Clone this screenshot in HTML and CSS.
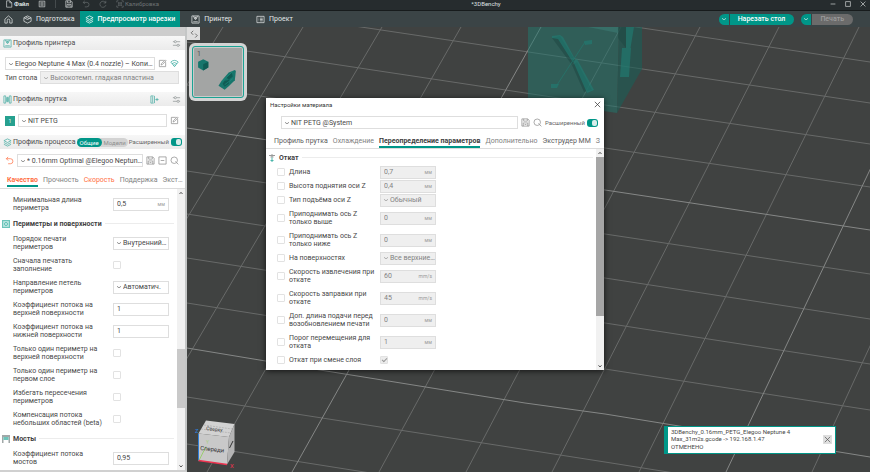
FILE: index.html
```html
<!DOCTYPE html>
<html lang="ru">
<head>
<meta charset="utf-8">
<title>*3DBenchy</title>
<link rel="stylesheet" href="styles.css">
</head>
<body>
<svg class="sprite" aria-hidden="true">
  <symbol id="i-chev" viewBox="0 0 6 6"><path d="M1 2.300 3 3.800 5 2.300"/></symbol>
  <symbol id="i-file" viewBox="0 0 10 10"><path d="M2 1h4l2.500 2.500V9H2zM6 1v2.500h2.500"/></symbol>
  <symbol id="i-menu" viewBox="0 0 10 10"><path d="M1.500 1.500h7v7h-7zM3 3.500h4M3 5h4M3 6.500h4"/></symbol>
  <symbol id="i-save" viewBox="0 0 10 10"><path d="M1 1h6.500L9 2.500V9H1zM3 1v2.500h4V1M2.500 9V5.500h5V9M4 7.200h2"/></symbol>
  <symbol id="i-undo" viewBox="0 0 10 10"><path d="M3.500 1 1.500 3l2 2M1.500 3H6a2.800 2.800 0 0 1 0 5.600H3.500"/></symbol>
  <symbol id="i-redo" viewBox="0 0 10 10"><path d="M8.500 1v2.700H5.800M8.300 3.500A3.800 3.800 0 1 0 8.600 6.500"/></symbol>
  <symbol id="i-calib" viewBox="0 0 10 10"><path d="M1 3V1h2M7 1h2v2M9 7v2H7M3 9H1V7M3 3.200h1.200v1.200H3zM5.800 3.200H7v1.200H5.800zM3 5.800h1.200V7H3zM5.800 5.800H7V7H5.800z"/></symbol>
  <symbol id="i-home" viewBox="0 0 10 10"><path d="M1 4.600 5 1l4 3.600V9H6.400V6a1.400 1.400 0 0 0-2.800 0v3H1z"/></symbol>
  <symbol id="i-cube" viewBox="0 0 10 10"><path d="M5 1l4 2v4L5 9 1 7V3zM1 3l4 2 4-2M3 2l4 2"/></symbol>
  <symbol id="i-layers" viewBox="0 0 10 10"><path d="M5 1l4 2-4 2-4-2zM1 5l4 2 4-2M1 7l4 2 4-2"/></symbol>
  <symbol id="i-printer" viewBox="0 0 10 10"><path d="M1 1h8v8H1zM3 1v1.500h4V1M5 2.500v1.500M3.500 3.500h3L5 5.300zM2.500 7.500h5"/></symbol>
  <symbol id="i-project" viewBox="0 0 10 10"><path d="M1 1.500h8v7H1zM3 3.500h.5M4.500 3.500H7.500M3 5h.5M4.500 5H7.500M3 6.500h.5M4.500 6.500H7.500"/></symbol>
  <symbol id="i-sliders" viewBox="0 0 10 10"><path d="M1 3h1.500M5 3h4M1 7h4.500M8 7h1"/><circle cx="3.700" cy="3" r="1.200"/><circle cx="6.800" cy="7" r="1.200"/></symbol>
  <symbol id="i-edit" viewBox="0 0 10 10"><path d="M6.500 1.500h-5v7h7v-5M3.500 6.700l.3-1.500L8 1l1 1-4.200 4.200z"/></symbol>
  <symbol id="i-wifi" viewBox="0 0 10 10"><path d="M.8 3.400a6.300 6.300 0 0 1 8.400 0M2.200 5.200a4.200 4.200 0 0 1 5.600 0M3.600 7a2 2 0 0 1 2.800 0M5 8.500v.2M1 3.500l4 5 4-5"/></symbol>
  <symbol id="i-spool" viewBox="0 0 10 10"><path d="M1 1h2v8H1zM7 1h2v8H7zM4 2.500v5M5 2v6M6 2.500v5"/></symbol>
  <symbol id="i-add" viewBox="0 0 10 10"><path d="M4 1H1v8h3M3 1.500v7M5 1v8M6 5h3.500M7.800 3.300v3.400"/></symbol>
  <symbol id="i-minus" viewBox="0 0 10 10"><path d="M1 1h8v8H1zM3 5h4"/></symbol>
  <symbol id="i-search" viewBox="0 0 10 10"><circle cx="4.700" cy="4.700" r="3.600"/><path d="M7.200 7.200 9.300 9.300M6 6l1 1"/></symbol>
  <symbol id="i-x" viewBox="0 0 10 10"><path d="M2 2l6 6M8 2 2 8"/></symbol>
  <symbol id="i-up" viewBox="0 0 6 6"><path d="M1.500 4 3 2.300 4.500 4"/></symbol>
  <symbol id="i-down" viewBox="0 0 6 6"><path d="M1.500 2.300 3 4 4.500 2.300"/></symbol>
</svg>

<header class="titlebar">
  <button class="tb-btn file"><svg class="ic"><use href="#i-file"/></svg>Файл</button>
  <button class="tb-btn" aria-label="Меню"><svg class="ic"><use href="#i-menu"/></svg></button>
  <span class="sep"></span>
  <button class="tb-btn save" aria-label="Сохранить"><svg class="ic"><use href="#i-save"/></svg></button>
  <button class="tb-btn dim" aria-label="Отменить"><svg class="ic"><use href="#i-undo"/></svg></button>
  <button class="tb-btn dim redo" aria-label="Повторить"><svg class="ic"><use href="#i-redo"/></svg></button>
  <button class="tb-btn dim"><svg class="ic"><use href="#i-calib"/></svg>Калибровка</button>
  <span class="doc">*3DBenchy</span>
  <button class="tb-btn win" aria-label="Свернуть"><svg class="ic" viewBox="0 0 10 10"><path d="M2 5h6"/></svg></button>
  <button class="tb-btn win" aria-label="Развернуть"><svg class="ic" viewBox="0 0 10 10"><path d="M2 2h6v6H2z"/></svg></button>
  <button class="tb-btn win" aria-label="Закрыть"><svg class="ic"><use href="#i-x"/></svg></button>
</header>

<nav class="toolbar">
  <button class="nav-btn home" aria-label="Домой"><svg class="ic"><use href="#i-home"/></svg></button>
  <button class="nav-btn"><svg class="ic"><use href="#i-cube"/></svg>Подготовка</button>
  <button class="nav-btn active"><svg class="ic"><use href="#i-layers"/></svg>Предпросмотр нарезки</button>
  <button class="nav-btn wide"><svg class="ic"><use href="#i-printer"/></svg>Принтер</button>
  <button class="nav-btn wide"><svg class="ic"><use href="#i-project"/></svg>Проект</button>
  <div class="split">
    <button class="split-drop" aria-label="Варианты нарезки"><svg class="chev"><use href="#i-chev"/></svg></button>
    <button class="split-main">Нарезать стол</button>
  </div>
  <div class="split print">
    <button class="split-drop" aria-label="Варианты печати"><svg class="chev"><use href="#i-chev"/></svg></button>
    <button class="split-main" disabled>Печать</button>
  </div>
</nav>

<main class="work">
  <aside class="side">
    <div class="band"></div>
    <section class="group printer">
      <h2 class="head"><svg class="ic teal"><use href="#i-printer"/></svg><span>Профиль принтера</span><svg class="ic tail"><use href="#i-sliders"/></svg></h2>
      <div class="line">
        <div class="pick grow"><svg class="chev"><use href="#i-chev"/></svg><select aria-label="Профиль принтера"><option>Elegoo Neptune 4 Max (0.4 nozzle) – Копи…</option></select></div>
        <button class="icon-btn" aria-label="Изменить"><svg class="ic"><use href="#i-edit"/></svg></button>
        <button class="icon-btn" aria-label="Сеть"><svg class="ic teal"><use href="#i-wifi"/></svg></button>
      </div>
      <div class="line bed">
        <label for="bed">Тип стола</label>
        <div class="pick grow off"><svg class="chev"><use href="#i-chev"/></svg><select id="bed"><option>Высокотемп. гладкая пластина</option></select></div>
      </div>
    </section>
    <section class="group filament">
      <h2 class="head"><svg class="ic teal"><use href="#i-spool"/></svg><span>Профиль прутка</span><svg class="ic tail teal"><use href="#i-add"/></svg><svg class="ic gap"><use href="#i-sliders"/></svg></h2>
      <div class="line">
        <button class="slot">1</button>
        <div class="pick grow"><svg class="chev"><use href="#i-chev"/></svg><select aria-label="Профиль прутка"><option>NIT PETG</option></select></div>
        <button class="icon-btn" aria-label="Изменить"><svg class="ic"><use href="#i-edit"/></svg></button>
      </div>
    </section>
    <section class="group process">
      <h2 class="head"><svg class="ic teal"><use href="#i-layers"/></svg><span>Профиль процесса</span>
        <span class="pill"><button class="on">Общие</button><button>Модели</button></span>
        <label class="adv tail">Расширенный<input type="checkbox" class="toggle" checked></label></h2>
      <div class="line">
        <button class="icon-btn orange" aria-label="Сбросить"><svg class="ic"><use href="#i-undo"/></svg></button>
        <div class="pick grow"><svg class="chev"><use href="#i-chev"/></svg><select aria-label="Профиль процесса"><option>* 0.16mm Optimal @Elegoo Neptun…</option></select></div>
        <button class="icon-btn" aria-label="Сохранить"><svg class="ic"><use href="#i-save"/></svg></button>
        <button class="icon-btn" aria-label="Удалить"><svg class="ic"><use href="#i-minus"/></svg></button>
        <button class="icon-btn" aria-label="Поиск"><svg class="ic"><use href="#i-search"/></svg></button>
      </div>
    </section>
    <div class="tabs side-tabs" role="tablist">
      <button role="tab" class="tab cur changed">Качество</button>
      <button role="tab" class="tab">Прочность</button>
      <button role="tab" class="tab changed">Скорость</button>
      <button role="tab" class="tab">Поддержка</button>
      <button role="tab" class="tab">Экст…</button>
    </div>
    <div class="scroll">
      <div class="rows">
        <div class="row"><label for="p1">Минимальная длина периметра</label><span class="num"><input id="p1" value="0,5"><i>мм</i></span></div>
        <h3 class="sub"><svg class="subic" viewBox="0 0 8 8"><path class="f1" d="M0 0h8v8H0z"/><path class="w" d="M1.500 1.500h5v5h-5zM2 2l4 4M6 2 2 6"/></svg>Периметры и поверхности</h3>
        <div class="row"><label for="p2">Порядок печати периметров</label><span class="pick"><svg class="chev"><use href="#i-chev"/></svg><select id="p2"><option>Внутренний…</option></select></span></div>
        <div class="row"><label for="p3">Сначала печатать заполнение</label><input type="checkbox" id="p3" class="check"></div>
        <div class="row"><label for="p4">Направление петель периметров</label><span class="pick"><svg class="chev"><use href="#i-chev"/></svg><select id="p4"><option>Автоматич.</option></select></span></div>
        <div class="row"><label for="p5">Коэффициент потока на верхней поверхности</label><span class="num"><input id="p5" value="1"></span></div>
        <div class="row"><label for="p6">Коэффициент потока на нижней поверхности</label><span class="num"><input id="p6" value="1"></span></div>
        <div class="row"><label for="p7">Только один периметр на верхней поверхности</label><input type="checkbox" id="p7" class="check"></div>
        <div class="row"><label for="p8">Только один периметр на первом слое</label><input type="checkbox" id="p8" class="check"></div>
        <div class="row"><label for="p9">Избегать пересечения периметров</label><input type="checkbox" id="p9" class="check"></div>
        <div class="row"><label for="p10">Компенсация потока небольших областей (beta)</label><input type="checkbox" id="p10" class="check"></div>
        <h3 class="sub"><svg class="subic" viewBox="0 0 8 8"><path class="g" d="M0 0h8v2H0zM0 2h1.500v6H0zM6.500 2H8v6H6.500z"/><path class="f2" d="M1.500 2h5v3h-5z"/></svg>Мосты</h3>
        <div class="row"><label for="p11">Коэффициент потока мостов</label><span class="num"><input id="p11" value="0,95"></span></div>
      </div>
      <div class="bar"><svg class="arrow"><use href="#i-up"/></svg><span class="track"><span class="space"></span><span class="thumb"></span></span><svg class="arrow"><use href="#i-down"/></svg></div>
    </div>
  </aside>

  <section class="scene">
    <svg class="plate" viewBox="187 27 683 445" preserveAspectRatio="xMinYMin slice">
      <g class="grid">
        <path d="M223 27-54 472M303 27 33 472M382 27 120 472M461 27 207 472M621 27 379 472M700 27 466 472M779 27 552 472M859 27 639 472M1017 27 812 472"/>
        <path d="M187-40 870 62M187 1 870 103M187 42 605 105 870 144M187 85 605 148 870 187M187 171 605 234 870 274M187 214 605 278 870 319M187 258 605 323 870 364M187 303 605 369 870 410M187 397 605 462 870 504M187 444 605 510"/>
      </g>
      <g class="grid major">
        <path d="M541 27 292 472M938 27 726 472M187 128 605 190 870 230M187 348 320 370 525 403 605 414 870 457"/>
      </g>
      <g class="calcube">
        <path class="c-front" d="M528 27h91l-2 86-89-13z"/>
        <path class="c-side" d="M619 27h23v42l-25 44z"/>
        <path class="c-hi" d="M588 27h31l-1 6z"/>
        <path class="c-dark" d="M552 38l8-2 15 24-3 5zM572 65l5-3 15 28-8 2z"/>
        <path class="c-let" d="M552 36l8-1 3 2 12 22-3 2-14-22-6-1zM573 61l4-2 17 31-7 3zM584 41l8-1v4l-7 1zM551 84h8l-2 4h-6z"/>
        <path class="c-line" d="M585 42l-28 43"/>
        <path class="c-dark" d="M618 27h8v21l-8-10z"/>
        <path class="c-let" d="M622 48h9l-2 29h-9zM626 27h8l-4 24h-4z"/>
      </g>
      <g class="navcube">
        <path class="n-top" d="M206 420.500 234.500 424 229 437 198.500 433.500z"/>
        <path class="n-front" d="M198.500 433.500 229 437 227 464.500 198.500 460.500z"/>
        <path class="n-side" d="M229 437 234.500 424V452L227 464.500z"/>
        <path class="n-edge" d="M204 425l28 4M201 429l30 4"/>
        <path class="n-mark" d="M229.500 448l3.500-7"/>
        <path class="ax-z" d="M198.500 434v26.500"/>
        <path class="ax-y" d="M199 460.500l7-14"/>
        <path class="ax-x" d="M198.500 460.500l28.500 4"/>
        <text class="n-text" transform="translate(200 450) rotate(6)">Спереди</text>
        <text class="n-text small" transform="translate(206 430) rotate(6)">Сверху</text>
        <text class="t-z" x="195" y="433">Z</text>
        <text class="t-y" x="206" y="444">Y</text>
        <text class="t-x" x="230" y="468">X</text>
      </g>
    </svg>
    <button class="fold" aria-label="Свернуть панель"><svg class="ic" viewBox="0 0 10 10"><path d="M4 1 1.500 3.500 4 6M6.500 4.500 9 7 6.500 9.500"/></svg></button>
    <button class="thumbnail" aria-label="Стол 1">
      <span>1</span>
      <svg viewBox="0 0 49 49">
        <path class="m1" d="M10 12l5 2.500v5.500l-5 3-5-3v-5.500z"/><path class="m2" d="M10 17l5-2.500v5.500l-5 3z"/>
        <path class="m1" d="M25 38l3-5 7-8 6-2.500 1 1-1 9-6 6-4 3.500z"/>
        <path class="m2" d="M29 36l2-3 5-1-1 4-4 3zM33 30l5-5 1 4-4 3z"/><path class="m3" d="M28 34l11-10M31 37l8-6"/>
      </svg>
    </button>
    <div class="toast" role="status">
      <p>3DBenchy_0.16mm_PETG_Elegoo Neptune 4<br>Max_31m2s.gcode -&gt; 192.168.1.47</p>
      <p class="state">ОТМЕНЕНО</p>
      <button class="toast-x" aria-label="Закрыть"><svg class="ic"><use href="#i-x"/></svg></button>
    </div>
  </section>
</main>

<div class="dialog" role="dialog" aria-labelledby="dt">
  <div class="dlg-title"><span id="dt">Настройки материала</span><button class="icon-btn" aria-label="Закрыть"><svg class="ic"><use href="#i-x"/></svg></button></div>
  <div class="line dlg-line">
    <div class="pick grow"><svg class="chev"><use href="#i-chev"/></svg><select aria-label="Материал"><option>NIT PETG @System</option></select></div>
    <button class="icon-btn" aria-label="Сохранить"><svg class="ic"><use href="#i-save"/></svg></button>
    <button class="icon-btn" aria-label="Поиск"><svg class="ic"><use href="#i-search"/></svg></button>
    <label class="adv">Расширенный<input type="checkbox" class="toggle" checked></label>
  </div>
  <div class="tabs dlg-tabs" role="tablist">
    <button role="tab" class="tab dark">Профиль прутка</button>
    <button role="tab" class="tab">Охлаждение</button>
    <button role="tab" class="tab cur">Переопределение параметров</button>
    <button role="tab" class="tab">Дополнительно</button>
    <button role="tab" class="tab dark">Экструдер ММ</button>
    <button role="tab" class="tab">З</button>
  </div>
  <div class="scroll">
    <div class="rows">
      <h3 class="sub"><svg class="subic" viewBox="0 0 8 8"><path class="s" d="M1 1.500h6M4 0v3M2.500 3h3"/><path class="t" d="M4 3.500v4.500M2.500 6.500h3"/></svg>Откат</h3>
      <div class="row one"><input type="checkbox" class="check" aria-label="Длина"><label for="m1">Длина</label><span class="num off"><input id="m1" value="0,7" disabled><i>мм</i></span></div>
      <div class="row one"><input type="checkbox" class="check" aria-label="Высота поднятия"><label for="m2">Высота поднятия оси Z</label><span class="num off"><input id="m2" value="0,4" disabled><i>мм</i></span></div>
      <div class="row one"><input type="checkbox" class="check" aria-label="Тип подъёма"><label for="m3">Тип подъёма оси Z</label><span class="pick off"><svg class="chev"><use href="#i-chev"/></svg><select id="m3" disabled><option>Обычный</option></select></span></div>
      <div class="row"><input type="checkbox" class="check" aria-label="Только выше"><label for="m4">Приподнимать ось Z<br>только выше</label><span class="num off"><input id="m4" value="0" disabled><i>мм</i></span></div>
      <div class="row"><input type="checkbox" class="check" aria-label="Только ниже"><label for="m5">Приподнимать ось Z<br>только ниже</label><span class="num off"><input id="m5" value="0" disabled><i>мм</i></span></div>
      <div class="row one"><input type="checkbox" class="check" aria-label="На поверхностях"><label for="m6">На поверхностях</label><span class="pick off"><svg class="chev"><use href="#i-chev"/></svg><select id="m6" disabled><option>Все верхние…</option></select></span></div>
      <div class="row"><input type="checkbox" class="check" aria-label="Скорость извлечения"><label for="m7">Скорость извлечения при откате</label><span class="num off"><input id="m7" value="60" disabled><i>mm/s</i></span></div>
      <div class="row"><input type="checkbox" class="check" aria-label="Скорость заправки"><label for="m8">Скорость заправки при<br>откате</label><span class="num off"><input id="m8" value="45" disabled><i>mm/s</i></span></div>
      <div class="row"><input type="checkbox" class="check" aria-label="Доп. длина подачи"><label for="m9">Доп. длина подачи перед возобновлением печати</label><span class="num off"><input id="m9" value="0" disabled><i>мм</i></span></div>
      <div class="row"><input type="checkbox" class="check" aria-label="Порог перемещения"><label for="m10">Порог перемещения для отката</label><span class="num off"><input id="m10" value="1" disabled><i>мм</i></span></div>
      <div class="row one"><input type="checkbox" class="check" aria-label="Смена слоя"><label for="m11">Откат при смене слоя</label><input type="checkbox" id="m11" class="check" checked disabled></div>
    </div>
    <div class="bar"><svg class="arrow"><use href="#i-up"/></svg><span class="track"><span class="thumb"></span></span><svg class="arrow"><use href="#i-down"/></svg></div>
  </div>
</div>
</body>
</html>
```
FILE: styles.css
```css
:root {
  --teal: #009688;
  --text: #484848;
  --muted: #828282;
  --border: #dedede;
  --fs: 7px;
  --fs-small: 6px;
}
* { box-sizing: border-box; margin: 0; padding: 0; }
body {
  height: 100vh;
  display: flex;
  flex-direction: column;
  overflow: hidden;
  font: var(--fs)/8px Roboto, "Noto Sans", sans-serif;
  color: var(--text);
  background: #404241;
}
button, input, select { font: inherit; color: inherit; border: 0; background: none; appearance: none; outline: 0; }
select { min-width: 0; flex: 1; white-space: nowrap; overflow: hidden; }
select:disabled, input:disabled { opacity: 1; }
h2, h3 { font-size: inherit; }
svg { flex: none; fill: none; stroke: currentColor; stroke-width: 1; }
.sprite { position: absolute; width: 0; height: 0; }
.ic { width: 9px; height: 9px; stroke-width: .8; }
.ic.teal { color: #35a99d; }
.chev { width: 6px; height: 6px; stroke-width: .6; }

/* Title bar */
.titlebar {
  flex: none;
  height: 11px;
  display: flex;
  align-items: center;
  padding: 0 3px 3px 5px;
  background: #262c2e;
  border-bottom: 1px solid #171b1c;
  color: #dfe2e2;
  font-size: var(--fs-small);
}
.tb-btn { display: flex; align-items: center; gap: 1px; height: 8px; }
.tb-btn .ic { width: 8px; height: 8px; }
.file { margin-right: 9px; font-weight: 700; }
.sep { width: 1px; height: 8px; background: #454b4d; margin: 0 9px 0 9px; }
.save { margin-right: 9px; }
.dim { color: #6d7375; }
.redo { margin: 0 9px; }
.doc { flex: 1; text-align: center; padding: 0 9px 0 0; }
.win { margin-left: 7px; }

/* Toolbar */
.toolbar {
  flex: none;
  height: 16px;
  display: flex;
  align-items: center;
  padding-right: 17px;
  background: #3b4446;
  color: #e4e8e8;
}
.nav-btn { height: 16px; display: flex; align-items: center; gap: 4px; padding: 0 5px; }
.nav-btn.home { padding: 0 5px 0 4px; }
.nav-btn.active { background: var(--teal); color: #fff; font-weight: 500; }
.nav-btn.wide { padding: 0 13px 0 11px; }
.split { display: flex; gap: 1px; height: 11px; margin-left: 7px; color: #fff; font-weight: 500; }
.nav-btn + .split { margin-left: auto; }
.split-drop { display: flex; align-items: center; padding: 0 2px; background: var(--teal); border-radius: 6px 0 0 6px; }
.split-main { padding: 0 9px 0 8px; background: var(--teal); border-radius: 0 6px 6px 0; }
.print .split-main { background: #6b6b6b; color: #9b9b9b; }

.work { flex: 1; min-height: 0; display: flex; }

/* Side panel */
.side {
  flex: 0 0 187px;
  min-width: 0;
  display: flex;
  flex-direction: column;
  background: #fff;
  border-right: 2px solid #c4c6c6;
  border-bottom: 2px solid #d0d0d0;
}
.band { height: 9px; background: #cdcdcd; }
.head {
  height: 14px;
  display: flex;
  align-items: center;
  gap: 1px;
  padding: 0 4px 0 3px;
  background: linear-gradient(#f7f7f7, #ebebeb);
  font-weight: 400;
  color: #4c4c4c;
  white-space: nowrap;
}
.head > .ic { color: #8d9292; }
.head > .ic.teal { color: #45aca2; }
.head > .tail { margin-left: auto; }
.head > .gap { margin-left: 12px; }
.line { display: flex; align-items: center; gap: 3px; padding: 0 6px 0 5px; }
.group .line { margin-top: 7px; }
.group .bed { margin: 1px 0 8px; gap: 3px; }
.filament .line { margin: 8px 0; }
.process .line { margin: 5px 0 7px; }
.pick {
  display: flex;
  align-items: center;
  gap: 1px;
  height: 13px;
  min-width: 0;
  padding: 0 0 0 2px;
  border: 1px solid var(--border);
  background: #fff;
}
.grow { flex: 1; }
.off { background: #efefef; color: var(--muted); }
.icon-btn { display: flex; color: #8c8c8c; }
.icon-btn.orange { color: #ff6f43; }
.slot { width: 10px; height: 10px; background: #26a08f; color: #d7efec; font-size: var(--fs-small); }
.pill { display: flex; height: 9px; border-radius: 5px; background: #d3d3d3; font-size: var(--fs-small); line-height: 9px; color: #8e8e8e; }
.pill button { padding: 0 2px; border-radius: 5px; }
.pill .on { padding: 0 3px; background: var(--teal); color: #fff; }
.adv { display: flex; align-items: center; gap: 2px; font-size: var(--fs-small); color: #666; white-space: nowrap; }
.toggle { position: relative; width: 11px; height: 8px; border-radius: 3px; background: var(--teal); }
.toggle::before { content: ""; position: absolute; right: 1px; top: 1px; width: 5px; height: 6px; border-radius: 2px; background: #d8ecea; }

.tabs { flex: none; display: flex; gap: 6px; height: 15px; padding: 0 0 0 7px; border-bottom: 1px solid #dcdcdc; }
.side-tabs { gap: 5px; }
.tab { flex: none; height: 13px; white-space: nowrap; color: #808080; border-bottom: 2px solid transparent; }
.tab.dark { color: #5c5c5c; }
.tab.cur { font-weight: 700; color: #3d3d3d; border-color: var(--teal); }
.tab.changed { color: #ff6f43; }

.scroll { flex: 1; min-height: 0; display: flex; overflow: hidden; }
.rows { flex: 1; min-width: 0; padding-top: 4px; }
.row { display: flex; align-items: center; height: 22px; padding-left: 13px; }
.row label { flex: none; width: 91px; }
.side .row label { margin-right: 9px; }
.num { display: flex; align-items: center; width: 56px; height: 13px; border: 1px solid var(--border); padding: 0 3px; background: #fff; }
.num input { flex: 1; width: 20px; }
.num i { font-style: normal; font-size: 5px; color: #999; }
.row .pick { width: 56px; }
.num.off, .pick.off { background: #efefef; }
.check { flex: none; width: 8px; height: 8px; border: 1px solid #e2e2e2; border-radius: 1px; background: #fff; }
.check:checked { background: #ececec; position: relative; }
.check:checked::before { content: ""; position: absolute; left: 1px; top: 1px; width: 4px; height: 2px; border: solid #999; border-width: 0 0 1px 1px; transform: rotate(-45deg); }
.sub { display: flex; align-items: center; gap: 3px; height: 17px; padding: 0 3px 0 2px; color: #3f3f3f; }
.sub::after { content: ""; flex: 1; height: 1px; background: #ececec; }
.subic { width: 8px; height: 8px; stroke: none; }
.f1, .f2 { fill: #6cc4ba; }
.g { fill: #a0a8a8; }
.w { stroke: #e4f5f3; stroke-width: .6; }
.s { stroke: #9a9a9a; }
.t { stroke: #4ab5aa; }

.bar { flex: none; width: 8px; display: flex; flex-direction: column; align-items: center; background: #f1f1f1; color: #555; }
.arrow { width: 6px; height: 8px; }
.track { flex: 1; align-self: stretch; display: flex; flex-direction: column; }
.space { flex: 152; }
.thumb { flex: 59; background: #c9c9c9; }
.side .track::after { content: ""; flex: 54; }

/* 3D scene */
.scene { flex: 1; min-width: 0; position: relative; overflow: hidden; background: #404241; }
.plate { position: absolute; width: 100%; height: 100%; }
.grid { stroke: #686a69; stroke-width: 1; }
.major { stroke: #858786; }
.calcube { stroke: none; }
.c-front { fill: #1f7a70; fill-opacity: .5; }
.c-side { fill: #1b5f57; fill-opacity: .6; }
.c-hi { fill: #3d7f78; fill-opacity: .5; }
.c-dark { fill: #1f4945; fill-opacity: .6; }
.c-let { fill: #1f7f74; fill-opacity: .6; }
.c-line { stroke: #24786e; stroke-width: 1; stroke-opacity: .7; }
.navcube { stroke: none; }
.n-top { fill: #d2d2d2; }
.n-front { fill: #c9c9c9; }
.n-side { fill: #b4b4b4; }
.n-edge { stroke: #8d8d8d; stroke-width: .4; stroke-dasharray: 2 1; }
.n-mark { stroke: #333; stroke-width: 1; }
.ax-z { stroke: #2f7fd8; }
.ax-y { stroke: #8fce5a; stroke-width: .8; }
.ax-x { stroke: #ee3350; stroke-width: 1.5; }
.n-text { fill: #333; font-size: 6px; }
.n-text.small { font-size: 5px; }
.t-z { fill: #2f7fd8; font-size: 6px; }
.t-y { fill: #a5cf84; font-size: 5px; }
.t-x { fill: #ee3350; font-size: 6px; }

.fold { position: absolute; left: 0; top: 0; width: 13px; height: 13px; display: grid; place-items: center; background: #dedede; color: #555; }
.fold .ic { stroke-width: 1; width: 8px; height: 8px; }
.thumbnail {
  position: absolute;
  left: 2px;
  top: 16px;
  width: 58px;
  height: 58px;
  padding: 3px;
  border-radius: 6px;
  background: #d3d4d4;
}
.thumbnail svg { display: block; width: 52px; height: 52px; border: 1px solid #1ba394; border-radius: 3px; background: #a3a5a4; box-shadow: inset 0 0 0 1px #c9cbca; stroke: none; }
.thumbnail span { position: absolute; left: 8px; top: 7px; color: #555; }
.m1 { fill: #17766c; }
.m2 { fill: #0f5c54; }
.m3 { stroke: #1f9084; stroke-width: .6; }

.toast {
  position: absolute;
  right: 34px;
  bottom: 18px;
  width: 172px;
  padding: 1px 30px 3px 3px;
  border: 1px solid var(--teal);
  border-left-width: 4px;
  background: #fff;
  font-size: var(--fs-small);
  line-height: 7px;
  white-space: nowrap;
}
.state { margin-top: 1px; }
.toast-x { position: absolute; right: 3px; top: 8px; width: 9px; height: 9px; background: #dedede; color: #555; }
.toast-x .ic { display: block; }

/* Material dialog */
.dialog {
  position: absolute;
  left: 266px;
  top: 98px;
  width: 338px;
  display: flex;
  flex-direction: column;
  background: #fff;
  box-shadow: 0 1px 6px rgba(0, 0, 0, .7);
}
.dlg-title { display: flex; align-items: center; justify-content: space-between; height: 13px; padding: 0 2px 0 4px; font-size: var(--fs-small); color: #333; }
.dlg-title .icon-btn { color: #333; }
.dlg-line { margin: 5px 0 6px; padding: 0 6px 0 15px; }
.dlg-tabs { height: 14px; gap: 5px; padding-left: 8px; }
.dialog .tab { height: 13px; }
.dialog .rows { padding: 1px 0 3px; }
.dialog .sub { height: 15px; }
.dialog .row { padding-left: 11px; }
.dialog .row.one { height: 14px; }
.dialog .row label { width: 91px; }
.dialog .row .check:first-child { margin-right: 4px; }
.dialog .thumb { flex: 157; background: #a6a6a6; }
.dialog .track::after { content: ""; flex: 46; }
```
